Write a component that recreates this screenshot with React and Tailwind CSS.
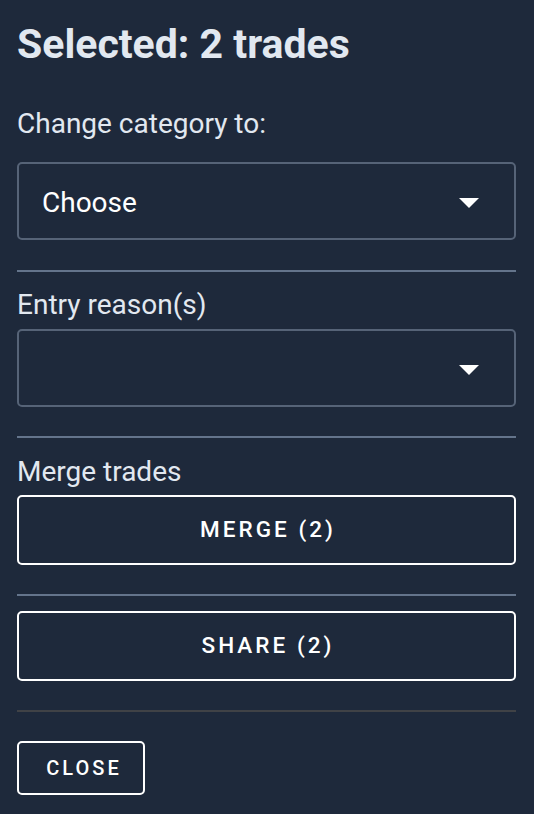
import React from "react";

function Arrow() {
  return (
    <svg width="20" height="10" viewBox="0 0 20 10" className="shrink-0">
      <polygon points="0,0 20,0 10,10" fill="#ffffff" />
    </svg>
  );
}

function Select({ value }) {
  return (
    <div className="flex h-[78px] items-center justify-between rounded-[5px] border-2 border-[#566377] pl-[23px] pr-[35px] pt-[3px]">
      <span className="text-[28px] leading-[32px] text-white">{value}</span>
      <Arrow />
    </div>
  );
}

function OutlineButton({ children, className }) {
  return (
    <button
      className={
        "flex items-center justify-center rounded-[5px] border-2 border-white font-medium uppercase text-white " +
        className
      }
    >
      {children}
    </button>
  );
}

export default function App() {
  return (
    <div
      className="min-h-[814px] w-[534px] bg-[#1e293b] pl-[17px] pr-[18px] pt-[20px]"
      style={{ fontFamily: "Roboto, 'Noto Sans', sans-serif" }}
    >
      <h1 className="text-[41px] font-bold leading-[48px] text-[#e2e8f0]">Selected: 2 trades</h1>

      <p className="mt-[40px] text-[28px] leading-[32px] text-[#e2e8f0]">Change category to:</p>
      <div className="mt-[22px]">
        <Select value="Choose" />
      </div>

      <div className="mt-[30px] h-[2px] bg-[#64748b]" />

      <p className="mt-[17px] text-[28px] leading-[32px] text-[#e2e8f0]">Entry reason(s)</p>
      <div className="mt-[8px]">
        <Select value="" />
      </div>

      <div className="mt-[29px] h-[2px] bg-[#64748b]" />

      <p className="mt-[18px] text-[28px] leading-[32px] text-[#e2e8f0]">Merge trades</p>
      <OutlineButton className="mt-[7px] h-[70px] w-full pl-[3px] text-[22.5px] tracking-[0.135em]">MERGE (2)</OutlineButton>

      <div className="mt-[29px] h-[2px] bg-[#64748b]" />

      <OutlineButton className="mt-[15px] h-[70px] w-full pl-[3px] text-[22.5px] tracking-[0.135em]">SHARE (2)</OutlineButton>

      <div className="mt-[29px] h-[2px] bg-[#404246]" />

      <OutlineButton className="mt-[29px] h-[54px] w-[128px] pl-[6px] text-[20px] tracking-[0.15em]">CLOSE</OutlineButton>
    </div>
  );
}
